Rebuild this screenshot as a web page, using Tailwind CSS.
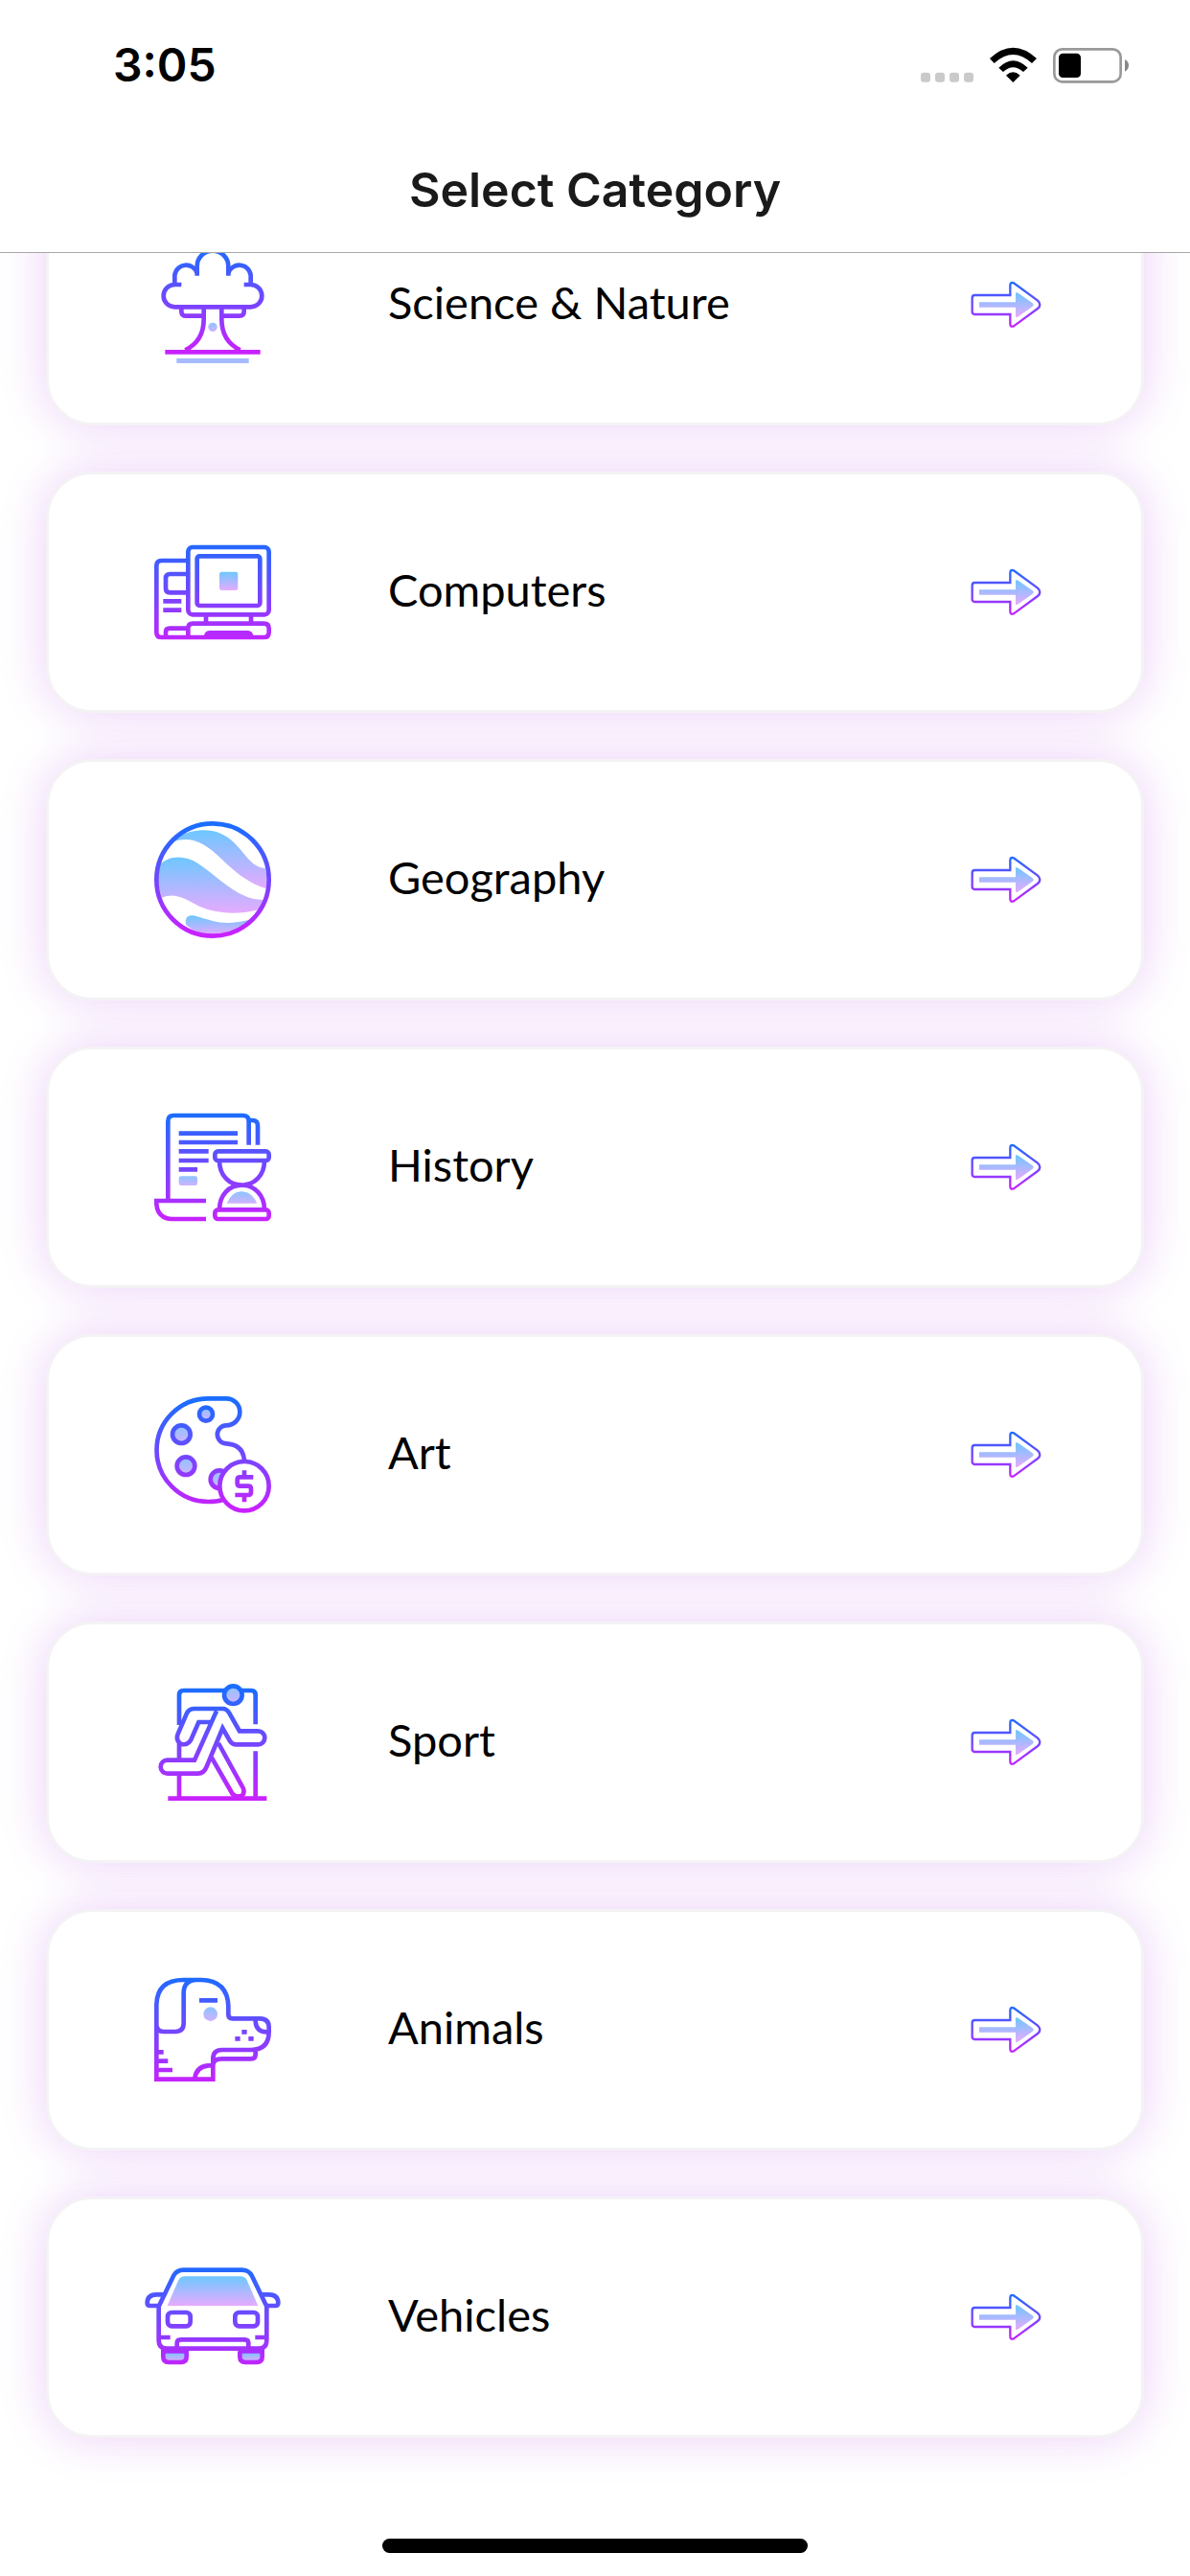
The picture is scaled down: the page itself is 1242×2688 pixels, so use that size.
<!DOCTYPE html>
<html lang="en">
<head>
<meta charset="utf-8">
<meta name="viewport" content="width=device-width, initial-scale=1">
<title>Select Category</title>
<script src="https://cdn.jsdelivr.net/npm/@tailwindcss/browser@4"></script>
</head>
<body class="bg-white text-black">
<svg class="absolute size-0" aria-hidden="true">
  <defs>
    <linearGradient id="line" gradientUnits="userSpaceOnUse" x1="0" y1="65" x2="0" y2="400"><stop offset="0" stop-color="#1a6dff"/><stop offset="1" stop-color="#c822ff"/></linearGradient>
    <linearGradient id="line-tree" gradientUnits="userSpaceOnUse" x1="0" y1="25" x2="0" y2="350"><stop offset="0" stop-color="#1a6dff"/><stop offset="1" stop-color="#c822ff"/></linearGradient>
    <linearGradient id="line-arrow" gradientUnits="userSpaceOnUse" x1="0" y1="70" x2="0" y2="216"><stop offset="0" stop-color="#1a6dff"/><stop offset="1" stop-color="#c822ff"/></linearGradient>
    <linearGradient id="soft" x1="0" y1="0" x2="0" y2="1"><stop offset="0" stop-color="#6dc7ff"/><stop offset="1" stop-color="#e6abff"/></linearGradient>
    <linearGradient id="pale" x1="0" y1="0" x2="0" y2="1"><stop offset="0" stop-color="#8cc4ff"/><stop offset="1" stop-color="#cfb2ff"/></linearGradient>
    <symbol id="arrow" viewBox="75 9 270 270">
      <path d="M112 114H223V83Q223 72 234 76L309 131Q323 144 309 156L234 211Q223 215 223 204V174H112Q104 174 104 166V122Q104 114 112 114Z" fill="none" stroke="url(#line-arrow)" stroke-width="7"/>
      <path d="M126 136H240V106Q244 104 250 109L293 139Q299 144 293 149L250 180Q244 184 240 182V152H126Z" fill="url(#soft)"/>
    </symbol>
  </defs>
</svg>
<div class="flex min-h-screen flex-col overflow-x-hidden">
  <header class="relative z-10 border-b border-[#a7a7a7] bg-white">
    <div class="flex h-[132px] items-center justify-between pt-1 pr-[64px] pl-[118px]">
      <time class="font-['Inter'] text-[48px] leading-[56px] font-semibold">3:05</time>
      <svg class="h-[38px] w-[218px]" viewBox="0 0 654 114" role="img" aria-label="No signal, Wi-Fi on, battery one third full">
        <g fill="#cacaca"><rect x="3" y="80" width="30" height="30" rx="9"/><rect x="48" y="80" width="30" height="30" rx="9"/><rect x="93" y="80" width="30" height="30" rx="9"/><rect x="138" y="80" width="30" height="30" rx="9"/></g>
        <path d="M292 111L270 89Q292 69 314 89ZM247 65Q292 20 338 65L324 78Q292 49 261 78ZM219 36Q292 -32 366 36L351 51Q292 -3 233 51Z"/>
        <rect x="421" y="7" width="208" height="102" rx="25" fill="none" stroke="#999" stroke-width="8"/>
        <rect x="435" y="20" width="69" height="76" rx="13"/>
        <path d="M642 39Q654 45 654 58Q654 71 642 77Z" fill="#888"/>
      </svg>
    </div>
    <h1 class="flex h-[131px] items-center justify-center text-center font-['Inter'] text-[50px] leading-[60px] font-semibold text-[#1a1a1a]">Select Category</h1>
  </header>
  <main class="-mt-[72px] flex-1 px-12 font-['Lato'] text-[47px] leading-[56px]">
    <ul class="flex flex-col gap-12">
      <li>
        <a href="#science" class="flex h-[252px] items-center rounded-[48px] border-3 border-[#f4f2f5] bg-white px-24 shadow-[0_0_50px_rgba(160,20,220,0.2)]">
          <svg class="size-[150px] shrink-0" viewBox="51 -21 450 450" fill="none" stroke="url(#line-tree)" stroke-width="14" aria-hidden="true">
            <path d="M227 113V84A49 49 0 0 1 325 84V113M227 105A36 36 0 0 0 157 112V141H178M325 105A36 36 0 0 1 395 112V141H374M157 141A35 35 0 0 0 157 211H395A35 35 0 0 0 395 141M178 211V224Q178 239 193 239H248M374 211V224Q374 239 359 239H304M248 211V250Q248 318 190 346M304 211V250Q304 318 362 346M127 352H425"/>
            <circle cx="276" cy="274" r="14" fill="url(#pale)" stroke="none"/><rect x="163" y="372" width="226" height="15" fill="#a6bbff" stroke="none"/>
          </svg>
          <span class="ml-[108px] flex-1 pb-1.5">Science &amp; Nature</span>
          <svg class="size-[90px] shrink-0" aria-hidden="true"><use href="#arrow"/></svg>
        </a>
      </li>
      <li>
        <a href="#computers" class="flex h-[252px] items-center rounded-[48px] border-3 border-[#f4f2f5] bg-white px-24 shadow-[0_0_50px_rgba(160,20,220,0.2)]">
          <svg class="size-[150px] shrink-0" viewBox="51 9 450 450" fill="none" stroke="url(#line)" stroke-width="14" aria-hidden="true">
            <rect x="199" y="93" width="253" height="211" rx="14"/><rect x="227" y="121" width="197" height="155" rx="8"/>
            <path d="M199 135H116Q100 135 100 151V359Q100 375 116 375H436Q452 375 452 359V347Q452 332 436 332H214Q199 332 199 347V375M199 177H142Q129 177 129 190V222Q129 235 142 235H199M121 262H178M121 290H178M129 375V359Q129 347 141 347H199M255 304V332M396 304V332"/>
            <path d="M248 375Q250 354 266 354H386Q402 354 404 375Z" fill="url(#line)" stroke="none"/>
            <rect x="297" y="170" width="58" height="58" rx="7" fill="url(#soft)" stroke="none"/>
          </svg>
          <span class="ml-[108px] flex-1 pb-1.5">Computers</span>
          <svg class="size-[90px] shrink-0" aria-hidden="true"><use href="#arrow"/></svg>
        </a>
      </li>
      <li>
        <a href="#geography" class="flex h-[252px] items-center rounded-[48px] border-3 border-[#f4f2f5] bg-white px-24 shadow-[0_0_50px_rgba(160,20,220,0.2)]">
          <svg class="size-[150px] shrink-0" viewBox="51 9 450 450" aria-hidden="true">
            <g fill="url(#soft)"><path d="M153 115Q175 90 206 84C260 72 305 80 345 120C380 155 400 197 440 197Q450 230 443 261C400 251 350 215 305 170C250 115 205 96 153 115Z"/><path d="M105 193C135 157 185 155 230 183C295 225 350 295 434 297Q428 315 419 328C350 347 270 339 220 310C180 287 150 275 117 291Q101 250 105 193Z"/><path d="M192 375C188 350 200 343 221 347C280 363 310 380 393 359Q340 412 276 408Q230 408 192 375Z"/></g>
            <circle cx="276" cy="234" r="176" fill="none" stroke="url(#line)" stroke-width="14"/>
          </svg>
          <span class="ml-[108px] flex-1 pb-1.5">Geography</span>
          <svg class="size-[90px] shrink-0" aria-hidden="true"><use href="#arrow"/></svg>
        </a>
      </li>
      <li>
        <a href="#history" class="flex h-[252px] items-center rounded-[48px] border-3 border-[#f4f2f5] bg-white px-24 shadow-[0_0_50px_rgba(160,20,220,0.2)]">
          <svg class="size-[150px] shrink-0" viewBox="51 9 450 450" fill="none" stroke="url(#line)" stroke-width="14" aria-hidden="true">
            <path d="M136 339V90Q136 72 154 72H370Q389 72 389 90V164M389 87H400Q417 87 417 104V164M170 128H354M170 156H354M170 184H263M170 213H263M170 241H228M255 339H100V350Q104 395 150 396H255"/>
            <rect x="283" y="184" width="169" height="29" rx="10"/><rect x="283" y="367" width="169" height="29" rx="10"/>
            <path d="M297 213C297 260 328 290 367 290S438 260 438 213M297 367C297 320 328 290 367 290S438 320 438 367"/>
            <rect x="170" y="262" width="58" height="29" rx="7" fill="url(#pale)" stroke="none"/><path d="M320 347Q335 310 367 310T415 347Z" fill="url(#pale)" stroke="none"/>
          </svg>
          <span class="ml-[108px] flex-1 pb-1.5">History</span>
          <svg class="size-[90px] shrink-0" aria-hidden="true"><use href="#arrow"/></svg>
        </a>
      </li>
      <li>
        <a href="#art" class="flex h-[252px] items-center rounded-[48px] border-3 border-[#f4f2f5] bg-white px-24 shadow-[0_0_50px_rgba(160,20,220,0.2)]">
          <svg class="size-[150px] shrink-0" viewBox="51 9 450 450" fill="none" stroke="url(#line)" stroke-width="14" aria-hidden="true">
            <path d="M308 375Q290 381 262 381A161 161 0 0 1 262 58H319A42 42 0 0 1 319 142A28 28 0 0 0 319 199Q370 202 375 250"/>
            <circle cx="255" cy="107" r="21" fill="url(#pale)"/><circle cx="178" cy="170" r="28" fill="url(#pale)"/><circle cx="192" cy="269" r="28" fill="url(#pale)"/><circle cx="297" cy="311" r="28" fill="url(#pale)"/>
            <circle cx="375" cy="332" r="77" fill="white"/>
            <path d="M403 304H362Q353 304 353 313V323Q353 332 362 332H387Q396 332 396 341V351Q396 360 387 360H346M375 283V304M375 360V382"/>
          </svg>
          <span class="ml-[108px] flex-1 pb-1.5">Art</span>
          <svg class="size-[90px] shrink-0" aria-hidden="true"><use href="#arrow"/></svg>
        </a>
      </li>
      <li>
        <a href="#sport" class="flex h-[252px] items-center rounded-[48px] border-3 border-[#f4f2f5] bg-white px-24 shadow-[0_0_50px_rgba(160,20,220,0.2)]">
          <svg class="size-[150px] shrink-0" viewBox="51 9 450 450" fill="none" stroke="url(#line)" stroke-width="14" aria-hidden="true">
            <path d="M171 180V86Q171 72 185 72H396Q410 72 410 86V178M410 262V404M171 235V290M171 332V404M136 410H445"/>
            <circle cx="340" cy="86" r="28" fill="url(#pale)"/>
            <path d="M288 129H219Q202 129 195 143L167 208Q159 228 178 240Q198 244 208 226L232 171H272M288 129H307Q320 129 328 143L360 199H418A20 20 0 0 1 418 241H350Q337 241 330 230L307 190L258 308Q249 332 230 332H134A21 21 0 0 1 134 290H219L288 136M272 281L338 396Q350 408 366 402Q378 393 371 377L294 237"/>
          </svg>
          <span class="ml-[108px] flex-1 pb-1.5">Sport</span>
          <svg class="size-[90px] shrink-0" aria-hidden="true"><use href="#arrow"/></svg>
        </a>
      </li>
      <li>
        <a href="#animals" class="flex h-[252px] items-center rounded-[48px] border-3 border-[#f4f2f5] bg-white px-24 shadow-[0_0_50px_rgba(160,20,220,0.2)]">
          <svg class="size-[150px] shrink-0" viewBox="51 9 450 450" fill="none" stroke="url(#line)" stroke-width="14" aria-hidden="true">
            <path d="M100 220V155Q102 78 185 78H240Q322 80 325 160V186Q325 199 338 199H424Q452 199 452 227V241Q452 297 396 297H305Q277 297 277 325V389H100V220Q102 240 122 240H158Q185 240 185 214V120Q185 78 226 78M234 142H291M410 199V208Q412 240 445 241M410 297V311Q410 325 396 325H305Q277 325 277 345M277 346H262Q222 350 220 389M100 304H122M100 332H136M100 360H150M367 241H383M346 262H362M388 262H404"/>
            <circle cx="269" cy="185" r="22" fill="url(#pale)" stroke="none"/>
          </svg>
          <span class="ml-[108px] flex-1 pb-1.5">Animals</span>
          <svg class="size-[90px] shrink-0" aria-hidden="true"><use href="#arrow"/></svg>
        </a>
      </li>
      <li>
        <a href="#vehicles" class="flex h-[252px] items-center rounded-[48px] border-3 border-[#f4f2f5] bg-white px-24 shadow-[0_0_50px_rgba(160,20,220,0.2)]">
          <svg class="size-[150px] shrink-0" viewBox="51 9 450 450" fill="none" stroke="url(#line)" stroke-width="14" aria-hidden="true">
            <path d="M134 198L169 118Q175 106 188 106H364Q377 106 383 118L418 198Z" fill="url(#soft)" stroke="none"/>
            <path d="M124 340H194V358Q194 375 177 375H138Q121 375 121 358V340ZM358 340H431V358Q431 375 414 375H378Q361 375 361 358V340Z" fill="url(#soft)"/>
            <path d="M107 200L154 103Q164 86 184 86H368Q388 86 398 103L445 200V305Q445 332 418 332H134Q107 332 107 305ZM126 163H99Q71 164 71 190Q71 198 80 198H107M426 163H453Q481 164 481 190Q481 198 472 198H445M107 297H143M445 297H409M164 332V316Q164 304 176 304H376Q388 304 388 316V332"/>
            <rect x="135" y="219" width="71" height="43" rx="13"/><rect x="346" y="219" width="71" height="43" rx="13"/>
          </svg>
          <span class="ml-[108px] flex-1 pb-1.5">Vehicles</span>
          <svg class="size-[90px] shrink-0" aria-hidden="true"><use href="#arrow"/></svg>
        </a>
      </li>
    </ul>
  </main>
  <footer class="flex justify-center pt-[100px] pb-6">
    <div class="h-[15px] w-[444px] rounded-full bg-black"></div>
  </footer>
</div>
</body>
</html>
